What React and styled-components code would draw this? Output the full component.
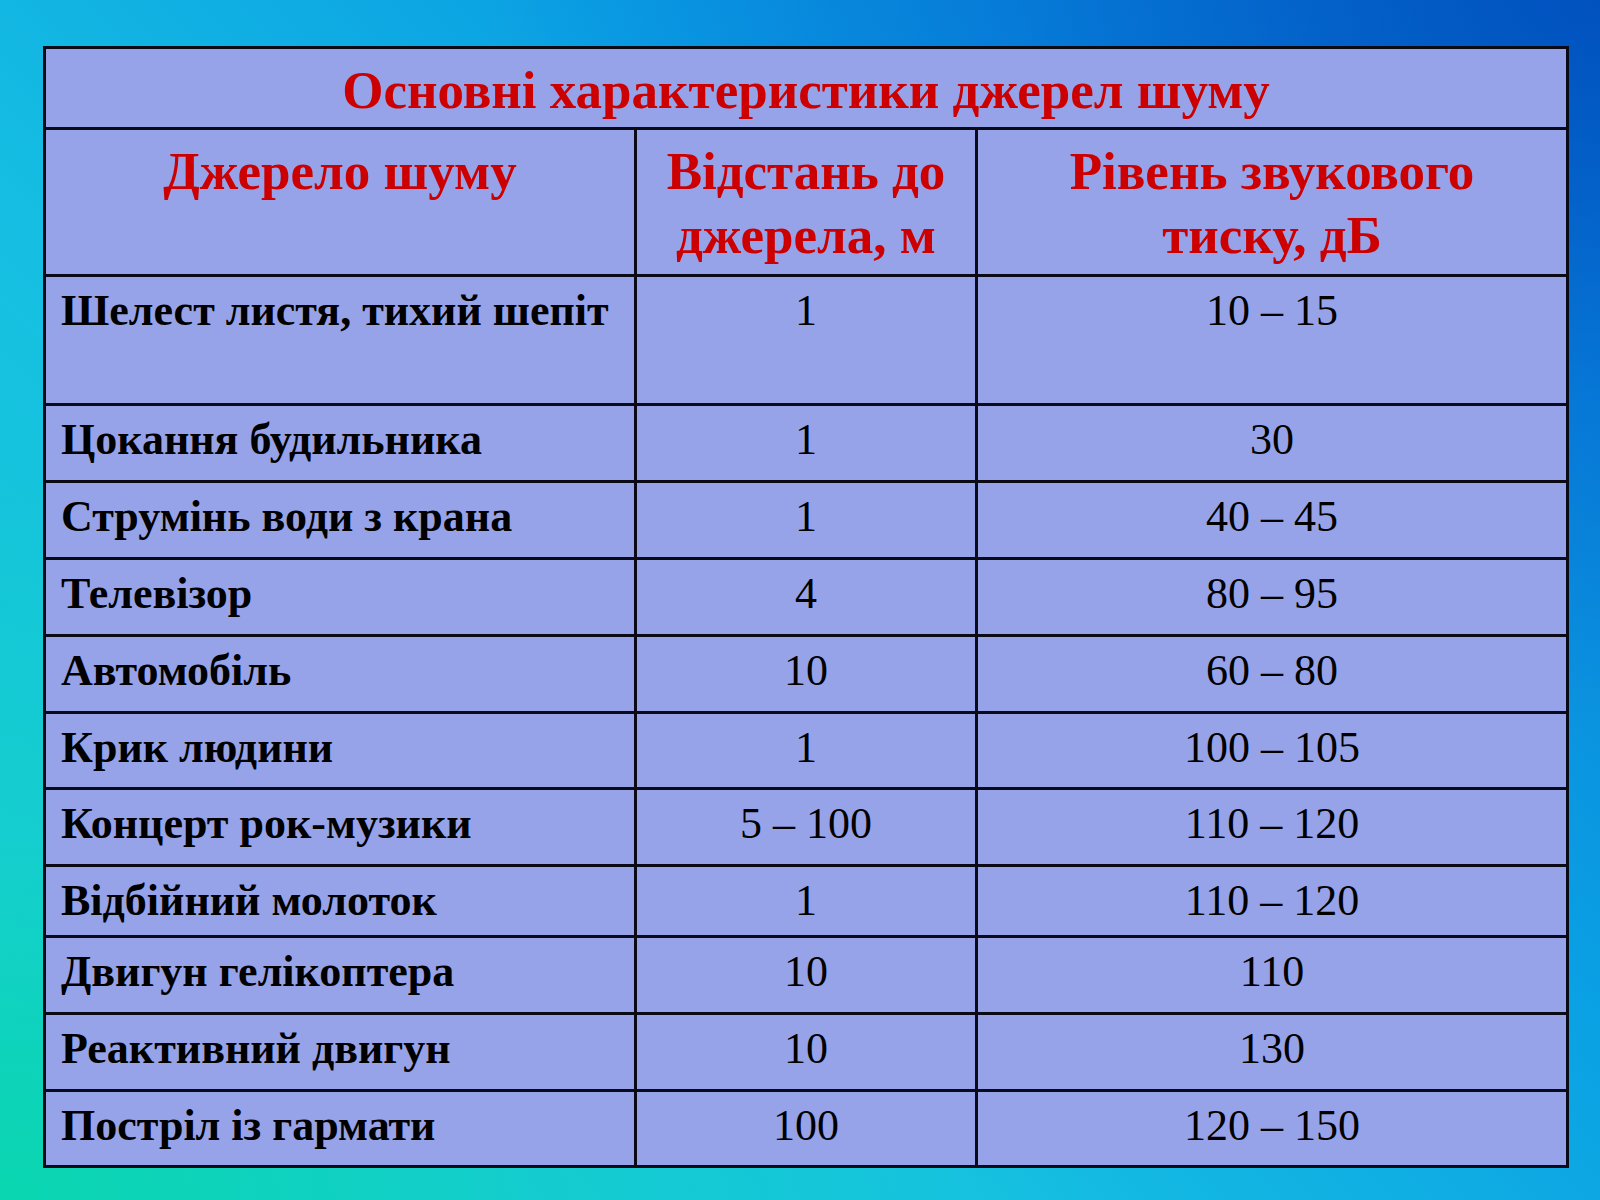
import styled, { createGlobalStyle } from "styled-components";

const GlobalStyle = createGlobalStyle`
  html, body {
    margin: 0;
    padding: 0;
  }
  body {
    width: 1600px;
    height: 1200px;
    overflow: hidden;
    font-family: "Liberation Serif", "Times New Roman", serif;
  }
`;

const Slide = styled.div`
  width: 1600px;
  height: 1200px;
  box-sizing: border-box;
  padding: 46px 0 0 43px;
  background:
    radial-gradient(ellipse 70% 60% at 100% 0%, rgba(0, 80, 190, 0.95) 0%, rgba(0, 100, 210, 0.4) 55%, rgba(0, 120, 220, 0) 100%),
    radial-gradient(ellipse 70% 60% at 0% 100%, rgba(10, 214, 176, 1) 0%, rgba(20, 210, 200, 0.5) 50%, rgba(20, 200, 220, 0) 100%),
    linear-gradient(225deg, #0a72d2 0%, #0a9fe4 35%, #16bfe2 65%, #14d0cc 100%);
`;

const Table = styled.div`
  width: 1526px;
  box-sizing: border-box;
  display: flex;
  flex-direction: column;
  gap: 3px;
  padding: 3px;
  background: #0b0b18;
`;

const Row = styled.div`
  display: grid;
  grid-template-columns: 588px 338px 588px;
  column-gap: 3px;
  height: ${(p) => p.$h}px;
`;

const TitleRow = styled.div`
  height: 78px;
  background: #97a3e8;
  box-sizing: border-box;
  padding-top: 15px;
  text-align: center;
  color: #cc0000;
  font-weight: bold;
  font-size: 53px;
  line-height: 53px;
  white-space: nowrap;
`;

const HeadCell = styled.div`
  background: #97a3e8;
  box-sizing: border-box;
  padding-top: 9px;
  text-align: center;
  color: #cc0000;
  font-weight: bold;
  font-size: 53px;
  line-height: 64px;
`;

const NameCell = styled.div`
  background: #97a3e8;
  box-sizing: border-box;
  padding: 12px 0 0 15px;
  color: #000;
  font-weight: bold;
  font-size: 44px;
  line-height: 44px;
  white-space: nowrap;
`;

const ValueCell = styled.div`
  background: #97a3e8;
  box-sizing: border-box;
  padding-top: 12px;
  text-align: center;
  color: #000;
  font-size: 44px;
  line-height: 44px;
  white-space: nowrap;
`;

const rows = [
  { name: "Шелест листя, тихий шепіт", dist: "1", level: "10 – 15", h: 126 },
  { name: "Цокання будильника", dist: "1", level: "30", h: 74 },
  { name: "Струмінь води з крана", dist: "1", level: "40 – 45", h: 74 },
  { name: "Телевізор", dist: "4", level: "80 – 95", h: 74 },
  { name: "Автомобіль", dist: "10", level: "60 – 80", h: 74 },
  { name: "Крик людини", dist: "1", level: "100 – 105", h: 73 },
  { name: "Концерт рок-музики", dist: "5 – 100", level: "110 – 120", h: 74 },
  { name: "Відбійний молоток", dist: "1", level: "110 – 120", h: 68 },
  { name: "Двигун гелікоптера", dist: "10", level: "110", h: 74 },
  { name: "Реактивний двигун", dist: "10", level: "130", h: 74 },
  { name: "Постріл із гармати", dist: "100", level: "120 – 150", h: 73 },
];

export default function App() {
  return (
    <>
      <GlobalStyle />
      <Slide>
        <Table>
          <TitleRow>Основні характеристики джерел шуму</TitleRow>
          <Row $h={144}>
            <HeadCell>Джерело шуму</HeadCell>
            <HeadCell>
              Відстань до
              <br />
              джерела, м
            </HeadCell>
            <HeadCell>
              Рівень звукового
              <br />
              тиску, дБ
            </HeadCell>
          </Row>
          {rows.map((r) => (
            <Row key={r.name} $h={r.h}>
              <NameCell>{r.name}</NameCell>
              <ValueCell>{r.dist}</ValueCell>
              <ValueCell>{r.level}</ValueCell>
            </Row>
          ))}
        </Table>
      </Slide>
    </>
  );
}
